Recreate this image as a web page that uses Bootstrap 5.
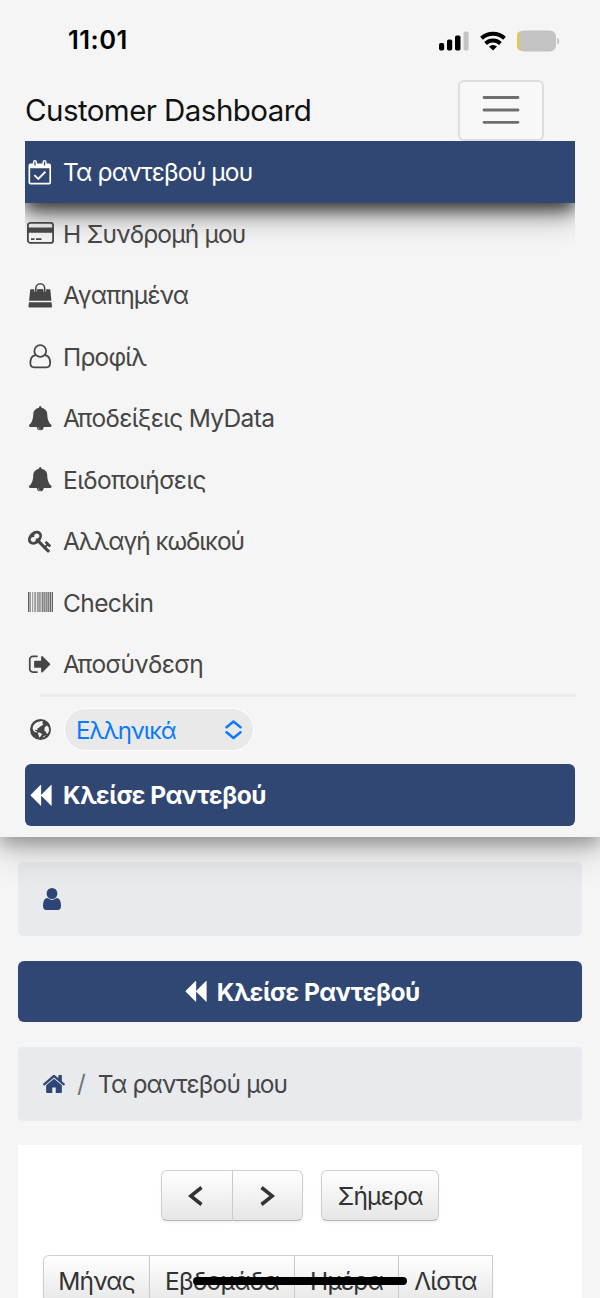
<!DOCTYPE html>
<html lang="el">
<head>
<meta charset="utf-8">
<meta name="viewport" content="width=device-width, initial-scale=1">
<title>Customer Dashboard</title>
<link href="https://cdn.jsdelivr.net/npm/bootstrap@5.3.0/dist/css/bootstrap.min.css" rel="stylesheet">
<style>
  html, body { height: 1298px; overflow: hidden; }
  body { background: #f5f5f5; color: #464646; font-family: Inter, "Noto Sans", sans-serif; font-size: 24.5px; line-height: 1.2; position: relative; }
  svg { display: block; flex: none; fill: currentColor; }
  .outline { fill: none; stroke: currentColor; }
  .ico { width: 24.5px; height: 24.5px; overflow: visible; }
  .txt { white-space: nowrap; letter-spacing: -.83px; padding-top: 2px; }
  .status-bar { height: 79px; padding: 2px 40px 0 68px; color: #000; }
  .status-bar .clock { font-size: 25.5px; font-weight: 600; letter-spacing: .5px; padding-top: 0; }
  .top-nav { height: 837px; background: #f5f5f5; box-shadow: 0 7px 16px rgba(0,0,0,.28), 0 14px 36px rgba(0,0,0,.2); z-index: 2; }
  .brand-row { height: 62px; padding: 0 56px 0 25px; }
  .brand-name { font-size: 29.5px; color: #111; letter-spacing: -.55px; }
  .menu-btn { width: 86px; height: 61px; border: 2px solid #dedede; border-radius: 6px; color: #6e6e6e; background: #f8f8f8; padding: 0; }
  .menu { margin: 0 25px; overflow: hidden; height: 553px; }
  .menu a { height: 61.5px; color: #464646; text-decoration: none; position: relative; }
  .menu a.active { background: #314773; color: #fff; box-shadow: 0 7px 17px rgba(0,0,0,.75), 0 16px 32px rgba(0,0,0,.22); }
  .slot { width: 31px; margin-right: 7px; display: flex; justify-content: center; }
  .rule { height: 3px; background: #ebebeb; margin: 0 24px 0 40px; }
  .lang-row { height: 67px; padding: 0 25px 2px; }
  .lang-select { width: 190px; height: 43px; border-radius: 22px; background: #e9e9e9; border: 1px solid #fff; color: #0a7aff; padding: 0 11px 0 11px; margin-left: 1px; }
  .book { height: 61.5px; border-radius: 6px; background: #314773; color: #fff; font-weight: 700; text-decoration: none; }
  .book .txt { letter-spacing: -.48px; }
  .book-menu { margin: 0 25px; }
  .book-page { margin: 24.5px 18px 25px; padding-left: 3px; gap: 9px; }
  .crumbs { height: 74px; border-radius: 5px; background: #e8eaed; padding: 0 25px; margin: 0 18px; }
  .user-box { margin-top: 25px; }
  .navy { color: #2e4677; }
  .slash { margin: 0 12px; color: #6c757d; }
  .calendar { background: #fff; margin: 0 18px; padding: 25px 25px 0; height: 153px; }
  .views { margin-top: 34px; }
  .tool { height: 51px; border: 1.5px solid #cfcfcf; border-bottom-color: #b3b3b3; background: linear-gradient(#fff, #e6e6e6); color: #333; display: flex; align-items: center; justify-content: center; padding: 0; border-radius: 0; box-shadow: 0 2px 3px rgba(0,0,0,.06); font-size: 24.5px; font-weight: 400; line-height: 1.2; }
  .tool + .tool { border-left: 0; }
  .r-start { border-top-left-radius: 6px; border-bottom-left-radius: 6px; }
  .r-end { border-top-right-radius: 6px; border-bottom-right-radius: 6px; }
  .w-prev { width: 72px; padding-right: 3px; } .w-next { width: 70px; }
  .tool.today { width: 118px; margin-left: 18px; }
  .w-month { width: 107px; } .w-week { width: 145px; } .w-day { width: 104px; } .w-list { width: 94px; }
  .ls-5 { letter-spacing: -.6px; } .ls-6 { letter-spacing: -.67px; } .ls-10 { letter-spacing: -1.03px; }
  .ls-lang { letter-spacing: -1.15px; font-size: 24px; padding-top: 3px; }
  .home-bar { position: absolute; left: 193px; top: 1277px; width: 214px; height: 8px; border-radius: 4px; background: #000; z-index: 3; }
</style>
</head>
<body>
<svg width="0" height="0" class="position-absolute" aria-hidden="true">
  <defs>
    <symbol id="bell" viewBox="0 0 1792 1792"><path d="M912 1696q0-16-16-16-59 0-101.500-42.500t-42.500-101.500q0-16-16-16t-16 16q0 73 51.500 124.500t124.500 51.500q16 0 16-16zm816-288q0 52-38 90t-90 38h-448q0 106-75 181t-181 75-181-75-75-181h-448q-52 0-90-38t-38-90q50-42 91-88t85-119.500 74.500-158.500 50-206 19.500-260q0-152 117-282.500t307-158.500q-8-19-8-39 0-40 28-68t68-28 68 28 28 68q0 20-8 39 190 28 307 158.500t117 282.500q0 139 19.500 260t50 206 74.500 158.500 85 119.500 91 88z"/></symbol>
    <symbol id="backward" viewBox="0 0 1792 1792"><path d="M1683 141q19-19 32-13t13 32v1472q0 26-13 32t-32-13l-710-710q-9-9-13-19v710q0 26-13 32t-32-13l-710-710q-19-19-19-45t19-45l710-710q19-19 32-13t13 32v710q4-10 13-19z"/></symbol>
  </defs>
</svg>

<header class="top-nav position-relative">
  <div class="status-bar d-flex align-items-center">
    <span class="clock txt me-auto">11:01</span>
    <svg width="121" height="24" viewBox="0 0 121 24">
      <rect x="0" y="14" width="5.200" height="7.500" rx="1.700"/><rect x="8" y="10.500" width="5.200" height="11" rx="1.700"/><rect x="16" y="6.500" width="5.500" height="15" rx="1.700"/><rect x="24.500" y="2.500" width="5.200" height="19" rx="1.700" fill="#c4c4c4" style="fill:#c4c4c4"/>
      <g class="outline" stroke-width="4"><path d="M42.500 9.300a17 17 0 0 1 23 0"/><path d="M46.600 14.500a10.900 10.900 0 0 1 14.800 0"/></g>
      <path d="M54 21.500l-4-3.900a5.900 5.900 0 0 1 8 0z"/>
      <rect x="78.500" y="1.500" width="38.500" height="21" rx="6" fill="#c3c3c3"/><path d="M81.500 2.100a6 6 0 0 0-3.500 5.900v8a6 6 0 0 0 3.500 5.900q-1.300-2-1.300-4V6.100q0-2 1.300-4z" fill="#e9c832"/><path d="M118.200 8.500q2.200 1 2.200 3.500t-2.200 3.500z" fill="#c3c3c3"/>
    </svg>
  </div>

  <div class="brand-row d-flex align-items-center justify-content-between">
    <span class="brand-name txt">Customer Dashboard</span>
    <button class="menu-btn btn d-flex align-items-center justify-content-center" type="button" aria-label="Menu">
      <svg class="outline" width="38" height="30" viewBox="0 0 38 30" stroke-width="2.800" stroke-linecap="round"><path d="M2 2.500h34M2 15h34M2 27.300h34"/></svg>
    </button>
  </div>

  <nav class="menu d-flex flex-column">
    <a href="#" class="active d-flex align-items-center flex-shrink-0"><span class="slot"><svg class="ico" viewBox="0 0 25 25"><path fill-rule="evenodd" d="M3 3.500h2V2a2 2 0 0 1 4.200 0v1.500h5.600V2a2 2 0 0 1 4.200 0v1.500h2.500a2 2 0 0 1 2 2v17.500a2 2 0 0 1-2 2H2.500a2 2 0 0 1-2-2V5.500a2 2 0 0 1 2-2zM2.200 8.500v14.800h19.600V8.500zM6.500 1.500v4.200h1.200V1.500zM16.300 1.500v4.200h1.200V1.500z"/><path class="outline" d="M6.500 15.500l4 3.800 7.200-7.300" stroke-width="1.900"/></svg></span><span class="txt">Τα ραντεβού μου</span></a>
    <a href="#" class="d-flex align-items-center flex-shrink-0"><span class="slot"><svg width="27" height="22" viewBox="0 0 27 22"><rect class="outline" x=".9" y=".9" width="25.200" height="20" rx="2.500" stroke-width="1.800"/><path d="M1 5.500h25v5.200H1zM4 16.300h3.500V18H4zM9 16.300h5.500V18H9z"/></svg></span><span class="txt">Η Συνδρομή μου</span></a>
    <a href="#" class="d-flex align-items-center flex-shrink-0"><span class="slot"><svg class="ico" viewBox="0 0 25 25"><path d="M2.300 6.500h20.400l1.200 11.700H1.100zM1 19.600h23l.5 4.200a1 1 0 0 1-1 1.200h-22a1 1 0 0 1-1-1.200z"/><path d="M8 9V5.300a4.500 4.500 0 0 1 9 0V9" style="fill:none" stroke="#f5f5f5" stroke-width="3"/><path d="M9.500 6.500h6V11h-6z"/><path class="outline" d="M8 9.500V5.300a4.500 4.500 0 0 1 9 0v4.200" stroke-width="1.600"/></svg></span><span class="txt">Αγαπημένα</span></a>
    <a href="#" class="d-flex align-items-center flex-shrink-0"><span class="slot"><svg class="ico outline" viewBox="0 0 25 25" stroke-width="1.800"><circle cx="12.500" cy="7.200" r="6"/><path d="M7.800 11.300C3.800 11.800 2.400 15.500 2.400 19.500c0 2.500 1.500 4.400 3.800 4.400h12.600c2.300 0 3.800-1.900 3.800-4.400 0-4-1.400-7.700-5.400-8.200"/></svg></span><span class="txt">Προφίλ</span></a>
    <a href="#" class="d-flex align-items-center flex-shrink-0"><span class="slot"><svg class="ico"><use href="#bell"/></svg></span><span class="txt ls-6">Αποδείξεις MyData</span></a>
    <a href="#" class="d-flex align-items-center flex-shrink-0"><span class="slot"><svg class="ico"><use href="#bell"/></svg></span><span class="txt ls-5">Ειδοποιήσεις</span></a>
    <a href="#" class="d-flex align-items-center flex-shrink-0"><span class="slot"><svg class="ico" viewBox="0 0 1792 1792"><path d="M832 512q0-80-56-136t-136-56-136 56-56 136q0 42 19 83-41-19-83-19-80 0-136 56t-56 136 56 136 136 56 136-56 56-136q0-42-19-83 41 19 83 19 80 0 136-56t56-136zm851 704q0 17-49 66t-66 49q-9 0-28.500-16t-36.500-33-38.500-40-24.500-26l-96 96 220 220q28 28 28 68 0 42-39 81t-81 39q-40 0-68-28l-671-671q-176 131-365 131-163 0-265.500-102.500t-102.500-265.500q0-160 95-313t248-248 313-95q163 0 265.500 102.500t102.500 265.500q0 189-131 365l355 355 96-96q-3-3-26-24.500t-40-38.500-33-36.500-16-28.500q0-17 49-66t66-49q13 0 23 10 6 6 46 44.500t82 79.500 86.500 86 73 78 28.500 41z"/></svg></span><span class="txt ls-10">Αλλαγή κωδικού</span></a>
    <a href="#" class="d-flex align-items-center flex-shrink-0"><span class="slot"><svg width="25" height="20" viewBox="0 0 25 20"><path d="M0 0h1.500v20H0zM2.300 0h.6v20h-.6zM4.300 0h.6v20h-.6zM5.900 0h.6v20h-.6zM7.400 0h.7v20h-.7zM9 0h.6v20H9zM10.500 0h1.100v20h-1.100zM12.500 0h.8v20h-.8zM14.200 0h1.300v20h-1.300zM16.300 0h1.200v20h-1.200zM18.300 0h1.200v20h-1.200zM20.200 0h.9v20h-.9zM21.700 0h1.300v20h-1.300zM23.700 0H25v20h-1.300z" opacity=".85"/></svg></span><span class="txt ls-5">Checkin</span></a>
    <a href="#" class="d-flex align-items-center flex-shrink-0"><span class="slot"><svg class="ico" viewBox="0 0 1792 1792"><path d="M704 1440q0 4 1 20t.5 26.500-3 23.500-10 19.500-20.500 6.500h-320q-119 0-203.500-84.500t-84.500-203.500v-704q0-119 84.500-203.500t203.500-84.500h320q13 0 22.500 9.500t9.500 22.500q0 4 1 20t.5 26.500-3 23.500-10 19.500-20.500 6.500h-320q-66 0-113 47t-47 113v704q0 66 47 113t113 47h312l11.500 1 11.500 3 8 5.500 7 9 2 13.500zm928-544q0 26-19 45l-544 544q-19 19-45 19t-45-19-19-45v-288h-448q-26 0-45-19t-19-45v-384q0-26 19-45t45-19h448v-288q0-26 19-45t45-19 45 19l544 544q19 19 19 45z"/></svg></span><span class="txt ls-6">Αποσύνδεση</span></a>
  </nav>
  <div class="rule"></div>
  <div class="lang-row d-flex align-items-center">
    <span class="slot"><svg width="21" height="21" viewBox="0 0 21 21"><circle cx="10.500" cy="10.500" r="10.500"/><path fill="#f5f5f5" d="M5 4.500Q7.500 2.500 10 2.400l2-.4 1.200 1.100-1.200 1 1.400 1.400-2.400 1.400-2.200 1.800-1.500.8.400 1.300-1.300.2-1.300-.6.300 1.500 1.700.6-.4 1.200-2.700-1.300L2.600 10 3 7.200zM14.800 8.200l2.200-1.700 1.700 2 .4 3-1.200 3-1.200.3-.7-2-1.700-1zM7.800 13.200l2.700.8 1.600 1.200-1.300 1.800-1.200 1.700-.8-1.800zM12.800 17.800l3.400-1.700-2.500 2.400z"/></svg></span>
    <div class="lang-select d-flex align-items-center justify-content-between"><span class="txt ls-lang">Ελληνικά</span>
      <svg class="outline" width="17" height="20" viewBox="0 0 17 20" stroke-width="2.500" stroke-linecap="round" stroke-linejoin="round"><path d="M1.500 7.200l7-5.700 7 5.700M1.500 12.300l7 5.700 7-5.700"/></svg>
    </div>
  </div>
  <a href="#" class="book book-menu d-flex align-items-center"><span class="slot"><svg class="ico"><use href="#backward"/></svg></span><span class="txt">Κλείσε Ραντεβού</span></a>
</header>

<main>
  <div class="crumbs user-box d-flex align-items-center">
    <svg class="navy" width="18" height="22" viewBox="256 128 1280 1536" preserveAspectRatio="none"><path d="M1536 1399q0 109-62.500 187t-150.500 78h-854q-88 0-150.500-78t-62.500-187q0-85 8.500-160.500t31.500-152 58.500-131 94-89 134.500-34.500q131 128 313 128t313-128q76 0 134.500 34.500t94 89 58.500 131 31.500 152 8.500 160.500zm-256-887q0 159-112.500 271.500t-271.500 112.500-271.500-112.500-112.500-271.500 112.500-271.500 271.500-112.500 271.500 112.500 112.500 271.500z"/></svg>
  </div>
  <a href="#" class="book book-page d-flex align-items-center justify-content-center"><svg class="ico"><use href="#backward"/></svg><span class="txt">Κλείσε Ραντεβού</span></a>
  <div class="crumbs d-flex align-items-center">
    <svg class="navy" width="22" height="18" viewBox="89 253 1614 1283" preserveAspectRatio="none"><path d="M1472 992v480q0 26-19 45t-45 19h-384v-384h-256v384h-384q-26 0-45-19t-19-45v-480q0-1 .5-3t.5-3l575-474 575 474q1 2 1 6zm223-69l-62 74q-8 9-21 11h-3q-13 0-21-7l-692-577-692 577q-12 8-24 7-13-2-21-11l-62-74q-8-10-7-23.500t11-21.500l719-599q32-26 76-26t76 26l244 204v-195q0-14 9-23t23-9h192q14 0 23 9t9 23v408l219 182q10 8 11 21.500t-7 23.500z"/></svg>
    <span class="slash">/</span><span class="txt">Τα ραντεβού μου</span>
  </div>
  <section class="calendar mt-4">
    <div class="d-flex justify-content-center">
      <div class="d-flex">
        <button class="tool btn r-start w-prev" type="button" aria-label="Προηγούμενο"><svg class="outline" width="15" height="20" viewBox="0 0 15 20" stroke-width="3.500"><path d="M13.500 1.500L2.700 10l10.800 8.500"/></svg></button>
        <button class="tool btn r-end w-next" type="button" aria-label="Επόμενο"><svg class="outline" width="15" height="20" viewBox="0 0 15 20" stroke-width="3.500"><path d="M1.500 1.500L12.300 10 1.500 18.500"/></svg></button>
      </div>
      <button class="tool btn r-start r-end today" type="button"><span class="txt">Σήμερα</span></button>
    </div>
    <div class="views d-flex">
      <button class="tool btn r-start w-month" type="button"><span class="txt">Μήνας</span></button>
      <button class="tool btn w-week" type="button"><span class="txt ls-6">Εβδομάδα</span></button>
      <button class="tool btn w-day" type="button"><span class="txt">Ημέρα</span></button>
      <button class="tool btn w-list" type="button"><span class="txt">Λίστα</span></button>
    </div>
  </section>
</main>
<div class="home-bar"></div>
<script src="https://cdn.jsdelivr.net/npm/bootstrap@5.3.0/dist/js/bootstrap.bundle.min.js"></script>
</body>
</html>
